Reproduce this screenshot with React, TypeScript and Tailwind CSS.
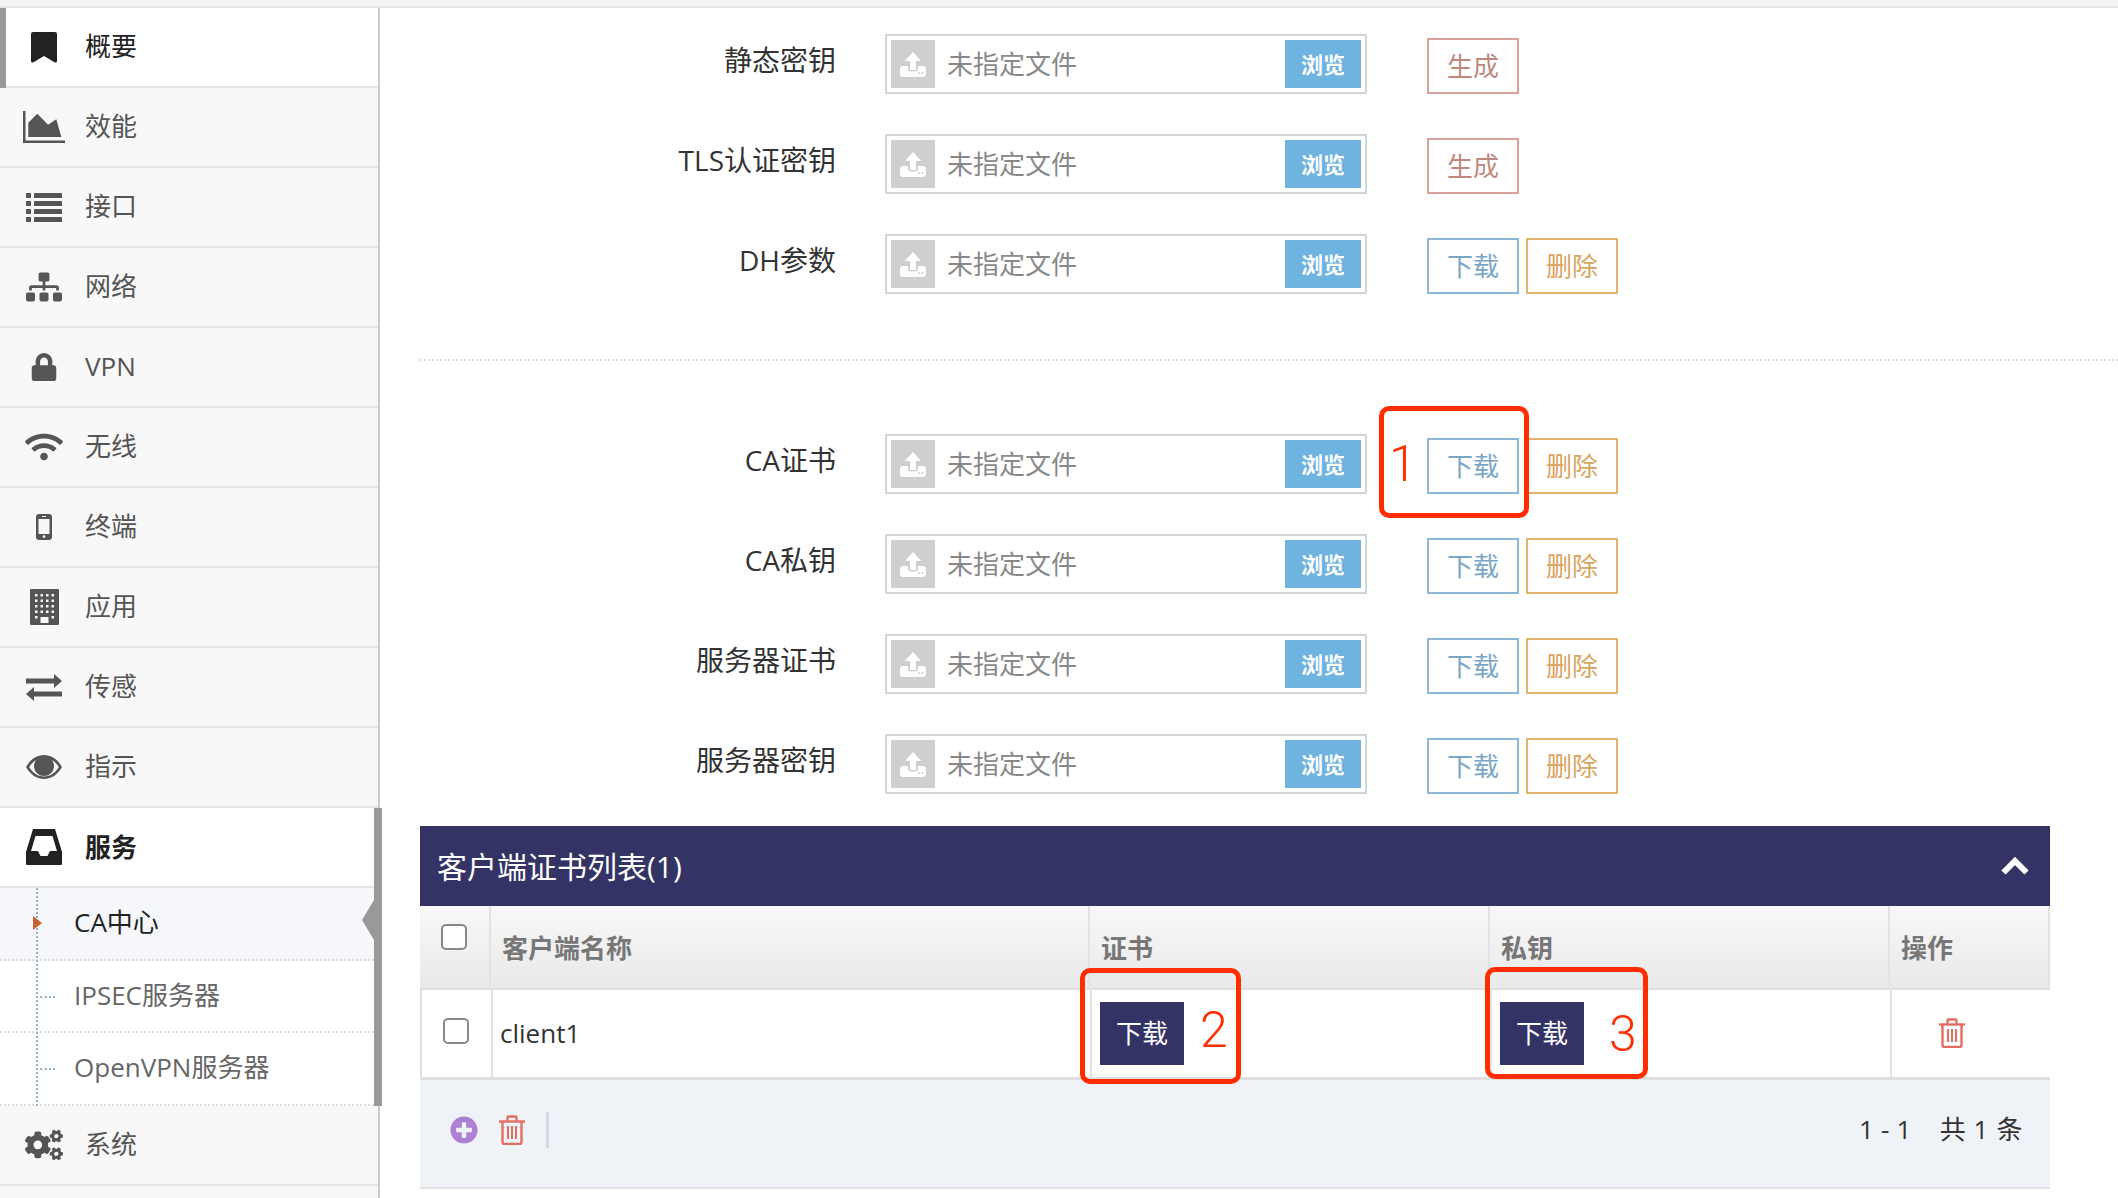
import React from 'react'
import { FaCogs, FaLock, FaPlusCircle, FaSitemap, FaWifi } from 'react-icons/fa'

const FONT = 'font-["Open_Sans","Noto_Sans_CJK_SC",sans-serif]'

const BookmarkIcon = () => (
  <svg width="26" height="31" viewBox="0 0 26 31" fill="#222">
    <path d="M2 0h22a2 2 0 0 1 2 2v27a1.5 1.5 0 0 1-2.5 1.2L13 24 2.5 30.2A1.5 1.5 0 0 1 0 29V2a2 2 0 0 1 2-2z" />
  </svg>
)

const AreaChartIcon = () => (
  <svg width="42" height="32" viewBox="0 0 42 32" fill="#555">
    <path d="M0 0h2.5v29.5H42V32H0z" />
    <path d="M5.3 26V11.7l9-9L25 13.7l8.3-5.4 5 17.7z" />
  </svg>
)

const ListIcon = () => (
  <svg width="36" height="29" viewBox="0 0 36 29" fill="#555">
    <path d="M0 0h5v5H0zM8 0h28v5H8zM0 8h5v5H0zM8 8h28v5H8zM0 16h5v5H0zM8 16h28v5H8zM0 24h5v5H0zM8 24h28v5H8z" />
  </svg>
)

const MobileIcon = () => (
  <svg width="16" height="26" viewBox="0 0 16 26" fill="#555">
    <path
      fillRule="evenodd"
      d="M3 0h10a3 3 0 0 1 3 3v20a3 3 0 0 1-3 3H3a3 3 0 0 1-3-3V3a3 3 0 0 1 3-3zM2.5 5v15h11V5zM6 2v1h4V2zM8 21.2a1.4 1.4 0 1 0 0 2.8 1.4 1.4 0 0 0 0-2.8z"
    />
  </svg>
)

const BuildingIcon = () => (
  <svg width="29" height="36" viewBox="0 0 29 36" fill="#555">
    <path
      fillRule="evenodd"
      d="M1 0h27a1 1 0 0 1 1 1v34a1 1 0 0 1-1 1H1a1 1 0 0 1-1-1V1a1 1 0 0 1 1-1zM5 5v2.500h2.500V5zM10.500 5v2.500H13V5zM16 5v2.500h2.500V5zM21.500 5v2.500H24V5zM5 10.500V13h2.500v-2.500zM10.500 10.500V13H13v-2.500zM16 10.500V13h2.500v-2.500zM21.500 10.500V13H24v-2.500zM5 16v2.500h2.500V16zM10.500 16v2.500H13V16zM16 16v2.500h2.500V16zM21.500 16v2.500H24V16zM5 21.500V24h2.500v-2.500zM10.500 21.500V24H13v-2.500zM16 21.500V24h2.500v-2.500zM21.500 21.500V24H24v-2.500zM5 27v2.500h2.500V27zM21.500 27v2.500H24V27zM10.500 28v6H18.500v-6z"
    />
  </svg>
)

const ExchangeIcon = () => (
  <svg width="36" height="27" viewBox="0 0 36 27" fill="#555">
    <path d="M0 4.500h28V0l8 7-8 7V9.500H0zM36 17.500H8V13l-8 7 8 7v-4.500h28z" />
  </svg>
)

const EyeIcon = () => (
  <svg width="36" height="24" viewBox="0 0 36 24" fill="#555">
    <path
      fillRule="evenodd"
      d="M18 0c8 0 14 5 18 12-4 7-10 12-18 12S4 19 0 12C4 5 10 0 18 0zM3.200 12C6.500 17.500 11.500 21.500 18 21.500S29.500 17.500 32.800 12C31 9 28.500 6.500 26 5a10 10 0 1 1-16 0C7.500 6.500 5 9 3.200 12z"
    />
    <path
      fillRule="evenodd"
      d="M18 3a8.500 8.500 0 1 1 0 17 8.500 8.500 0 0 1 0-17zM15 5.500a3.500 3.500 0 0 0-3.500 3.500c0 .8.700 1.200 1.200 1.200s1.200-.4 1.200-1.200c0-.8.400-1.200 1.100-1.200.7 0 1.100-.5 1.100-1.100S15.600 5.500 15 5.500z"
    />
  </svg>
)

const InboxIcon = () => (
  <svg width="36" height="36" viewBox="0 0 36 36" fill="#222">
    <path
      fillRule="evenodd"
      d="M7 0h22l7 23v12a1 1 0 0 1-1 1H1a1 1 0 0 1-1-1V23zM9.500 7L5 22h7l2.500 5h7l2.500-5h7L26.500 7z"
    />
  </svg>
)

const UploadIcon = () => (
  <svg width="26" height="25" viewBox="0 0 26 25" fill="#fff">
    <path d="M13 0l8 9h-5v9h-6V9H5z" />
    <path d="M3 14h5v2.500a3 3 0 0 0 3 3h4a3 3 0 0 0 3-3V14h5a3 3 0 0 1 3 3v5a3 3 0 0 1-3 3H3a3 3 0 0 1-3-3v-5a3 3 0 0 1 3-3z" />
    <circle cx="19" cy="21" r="1" fill="#cfcfcf" />
    <circle cx="22.500" cy="21" r="1" fill="#cfcfcf" />
  </svg>
)

const TrashIcon = () => (
  <svg width="26" height="30" viewBox="0 0 26 30" fill="none" stroke="#e2705f" strokeWidth="2.4">
    <path d="M0 6.500h26" />
    <path d="M8.500 6V2.500a1 1 0 0 1 1-1h7a1 1 0 0 1 1 1V6" />
    <path d="M3.500 7v20a2 2 0 0 0 2 2h15a2 2 0 0 0 2-2V7" />
    <path d="M9 11v13M13 11v13M17 11v13" strokeWidth="2" />
  </svg>
)

const ChevronUpIcon = () => (
  <svg width="28" height="18" viewBox="0 0 28 18" fill="none" stroke="#fff" strokeWidth="6" strokeLinejoin="miter">
    <path d="M2.500 15.500L14 4l11.500 11.500" />
  </svg>
)

const navTop = [
  { label: '概要', icon: <BookmarkIcon />, active: true },
  { label: '效能', icon: <AreaChartIcon /> },
  { label: '接口', icon: <ListIcon /> },
  { label: '网络', icon: <FaSitemap size={36} color="#555" /> },
  { label: 'VPN', icon: <FaLock size={28} color="#555" /> },
  { label: '无线', icon: <FaWifi size={38} color="#555" /> },
  { label: '终端', icon: <MobileIcon /> },
  { label: '应用', icon: <BuildingIcon /> },
  { label: '传感', icon: <ExchangeIcon /> },
  { label: '指示', icon: <EyeIcon /> },
]

const NavRow = ({ label, icon, active, bold }: { label: string; icon: React.ReactNode; active?: boolean; bold?: boolean }) => (
  <div
    className={`relative flex h-[80px] items-center border-b-2 border-[#e5e5e5] pl-[14px] text-[26px] ${
      active ? 'bg-white text-[#222]' : 'text-[#555]'
    } ${bold ? 'font-bold' : ''}`}
  >
    <div className="flex w-[60px] justify-center">{icon}</div>
    <span className={`ml-[11px] ${bold ? '' : 'mb-[2px]'}`}>{label}</span>
  </div>
)

const SubRow = ({ label, active }: { label: string; active?: boolean }) => (
  <div
    className={`relative flex h-[72.7px] items-center border-b-2 border-dotted border-[#ddd] pl-[74px] text-[26px] ${
      active ? 'bg-[#f5f7fb] text-[#222]' : 'bg-white text-[#666]'
    }`}
  >
    {active ? (
      <div className="absolute left-[33px] top-[28px] z-10 h-0 w-0 border-y-[7px] border-l-[9px] border-y-transparent border-l-[#c9602f]" />
    ) : (
      <div className="absolute left-[40px] top-[35px] w-[15px] border-t-2 border-dotted border-[#8fb4d0]" />
    )}
    <span className="mb-[2px]">{label}</span>
  </div>
)

const Sidebar = () => (
  <div className="relative h-full w-[380px] shrink-0 border-r-2 border-[#ccc] bg-[#f8f8f8]">
    {navTop.map((item) => (
      <NavRow key={item.label} {...item} />
    ))}
    <NavRow label="服务" icon={<InboxIcon />} active bold />
    <div className="relative pr-[4px]">
      <SubRow label="CA中心" active />
      <SubRow label="IPSEC服务器" />
      <SubRow label="OpenVPN服务器" />
      <div className="absolute bottom-0 left-[36px] top-0 border-l-2 border-dotted border-[#8fb4d0]" />
    </div>
    <NavRow label="系统" icon={<FaCogs size={38} color="#555" />} />
    <div className="absolute left-0 top-0 h-[80px] w-[6px] bg-[#999]" />
    <div className="absolute left-[374px] top-[800px] h-[298px] w-[8px] bg-[#999]" />
    <svg className="absolute left-[362px] top-[892px]" width="12" height="40" viewBox="0 0 12 40" fill="#999">
      <path d="M0 20L12 0v40z" />
    </svg>
  </div>
)

const OutlineButton = ({ label, tone }: { label: string; tone: 'red' | 'blue' | 'orange' }) => {
  const toneClass = {
    red: 'border-[#d9a19b] text-[#c0887d]',
    blue: 'border-[#8ab8d6] text-[#79a6c6]',
    orange: 'border-[#e3b36d] text-[#d9a45e]',
  }[tone]
  return (
    <button className={`h-[56px] w-[92px] border-2 bg-white text-[26px] ${toneClass}`}>{label}</button>
  )
}

const FileRow = ({ label, actions }: { label: string; actions: 'generate' | 'manage' }) => (
  <div className="mb-[40px] flex h-[60px]">
    <div className="w-[456px] pt-[6px] text-right text-[28px] leading-[40px] text-[#333]">{label}</div>
    <div className="ml-[49px] flex h-[60px] w-[482px] items-center border-2 border-[#d5d5d5] bg-white pl-[4px] pr-[4px]">
      <div className="flex h-[48px] w-[44px] items-center justify-center bg-[#cfcfcf]">
        <UploadIcon />
      </div>
      <span className="ml-[12px] flex-1 text-[26px] text-[#888]">未指定文件</span>
      <div className="flex h-[48px] w-[76px] items-center justify-center bg-[#6fb3e0] text-[22px] font-bold text-white">
        浏览
      </div>
    </div>
    <div className="ml-[60px] mt-[4px] flex gap-[7px]">
      {actions === 'generate' ? (
        <OutlineButton label="生成" tone="red" />
      ) : (
        <>
          <OutlineButton label="下载" tone="blue" />
          <OutlineButton label="删除" tone="orange" />
        </>
      )}
    </div>
  </div>
)

const Checkbox = () => <div className="h-[26px] w-[26px] rounded-[5px] border-2 border-[#888] bg-white" />

const DarkButton = () => (
  <button className="flex h-[63px] w-[84px] items-center justify-center bg-[#333366] text-[26px] text-white">下载</button>
)

const ClientTable = () => (
  <div className="ml-[40px] w-[1630px]">
    <div className="flex h-[80px] items-center justify-between bg-[#333366] pl-[17px] pr-[21px] text-[30px] text-white">
      <span>客户端证书列表(1)</span>
      <ChevronUpIcon />
    </div>
    <div className="flex h-[84px] border-b-2 border-[#e0e0e0] bg-gradient-to-b from-[#f8f8f8] to-[#e9e9e9] text-[26px] font-bold text-[#777]">
      <div className="flex w-[69px] justify-center pr-[2px] pt-[18px]">
        <Checkbox />
      </div>
      <div className="flex w-[599px] items-center border-l-2 border-[#e3e3e3] pl-[11px] pt-[2px]">客户端名称</div>
      <div className="flex w-[400px] items-center border-l-2 border-[#e3e3e3] pl-[11px] pt-[2px]">证书</div>
      <div className="flex w-[400px] items-center border-l-2 border-[#e3e3e3] pl-[11px] pt-[2px]">私钥</div>
      <div className="flex flex-1 items-center border-x-2 border-[#e3e3e3] pl-[11px] pt-[2px]">操作</div>
    </div>
    <div className="flex h-[90px] border-b-[3px] border-l-2 border-[#e0e0e0] bg-white text-[26px] text-[#333]">
      <div className="flex w-[69px] items-center justify-center pb-[6px] pr-[2px]">
        <Checkbox />
      </div>
      <div className="flex w-[599px] items-center border-l-2 border-[#e3e3e3] pl-[7px]">client1</div>
      <div className="flex w-[400px] items-center border-l-2 border-[#e3e3e3] pl-[8px]">
        <DarkButton />
      </div>
      <div className="flex w-[400px] items-center border-l-2 border-[#e3e3e3] pl-[8px]">
        <DarkButton />
      </div>
      <div className="flex flex-1 items-center justify-center border-l-2 border-[#e3e3e3] pb-[2px] pr-[38px]">
        <TrashIcon />
      </div>
    </div>
    <div className="flex h-[109px] items-center border-b-2 border-[#e2e2e2] bg-[#eff2f7] pb-[8px] pl-[30px] pr-[27px]">
      <FaPlusCircle size={28} color="#ad80d2" />
      <div className="ml-[21px]">
        <TrashIcon />
      </div>
      <div className="ml-[21px] h-[36px] w-[3px] bg-[#cfdbe2]" />
      <div className="ml-auto flex gap-[28px] text-[26px] text-[#333]">
        <span className="tracking-[0.2px]">1 - 1</span>
        <span className="tracking-[0.6px]">共 1 条</span>
      </div>
    </div>
  </div>
)

const Annotation = ({ box, digit, digitClass }: { box: string; digit: string; digitClass: string }) => (
  <>
    <div className={`absolute rounded-[10px] border-[5px] border-[#ff2d00] ${box}`} />
    <span className={`absolute font-["Roboto",sans-serif] text-[50px] font-light leading-[50px] text-[#ff2d00] ${digitClass}`}>
      {digit}
    </span>
  </>
)

const App: React.FC = () => {
  return (
    <div className={`relative flex h-[1198px] w-[2118px] flex-col overflow-hidden bg-white ${FONT}`}>
      <div className="h-[8px] shrink-0 border-b-2 border-[#e5e5e5] bg-[#f5f5f5]" />
      <div className="flex min-h-0 flex-1">
        <Sidebar />
        <div className="flex-1 pt-[26px]">
          <FileRow label="静态密钥" actions="generate" />
          <FileRow label="TLS认证密钥" actions="generate" />
          <FileRow label="DH参数" actions="manage" />
          <div className="mb-[73px] ml-[39px] mt-[65px] border-t-2 border-dotted border-[#ddd]" />
          <FileRow label="CA证书" actions="manage" />
          <FileRow label="CA私钥" actions="manage" />
          <FileRow label="服务器证书" actions="manage" />
          <FileRow label="服务器密钥" actions="manage" />
          <div className="-mt-[8px]">
            <ClientTable />
          </div>
        </div>
      </div>
      <Annotation box="left-[1379px] top-[406px] h-[112px] w-[150px]" digit="1" digitClass="left-[1389px] top-[439px]" />
      <Annotation box="left-[1080px] top-[968px] h-[116px] w-[161px]" digit="2" digitClass="left-[1200px] top-[1005px]" />
      <Annotation box="left-[1485px] top-[967px] h-[112px] w-[163px]" digit="3" digitClass="left-[1609px] top-[1009px]" />
    </div>
  )
}

export default App
